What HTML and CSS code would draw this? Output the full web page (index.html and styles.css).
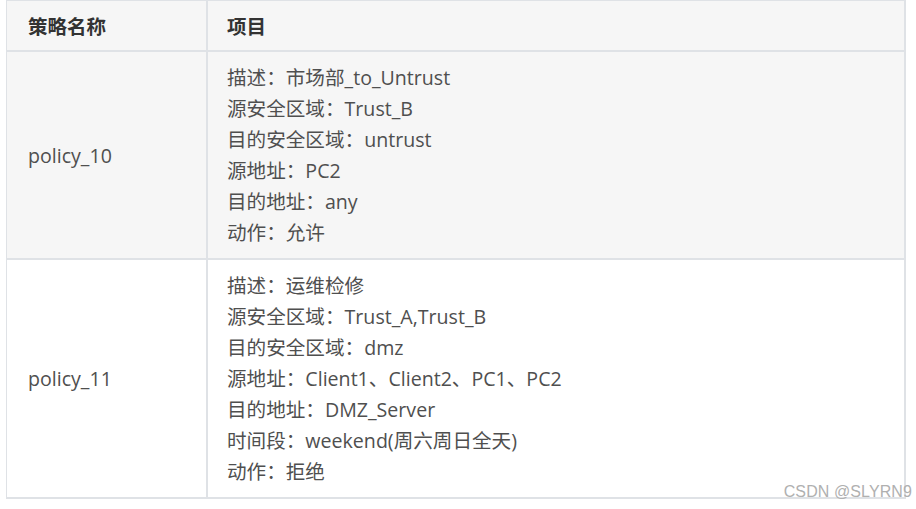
FILE: index.html
```html
<!DOCTYPE html>
<html lang="zh-CN">
<head>
<meta charset="utf-8">
<link rel="stylesheet" href="styles.css">
</head>
<body>
<div class="page">
<table class="policy">
  <thead>
    <tr><th class="c1">策略名称</th><th class="c2">项目</th></tr>
  </thead>
  <tbody>
    <tr class="odd">
      <td class="c1">policy_10</td>
      <td class="c2">描述：市场部_to_Untrust<br>源安全区域：Trust_B<br>目的安全区域：untrust<br>源地址：PC2<br>目的地址：any<br>动作：允许</td>
    </tr>
    <tr class="even">
      <td class="c1">policy_11</td>
      <td class="c2">描述：运维检修<br>源安全区域：Trust_A,Trust_B<br>目的安全区域：dmz<br>源地址：Client1、Client2、PC1、PC2<br>目的地址：DMZ_Server<br>时间段：weekend(周六周日全天)<br>动作：拒绝</td>
    </tr>
  </tbody>
</table>
<div class="watermark">CSDN @SLYRN9</div>
</div>
</body>
</html>
```

FILE: styles.css
```css
html, body {
  margin: 0;
  padding: 0;
  background: #ffffff;
}
.page {
  position: relative;
  width: 916px;
  height: 509px;
  padding: 0 0 0 6px;
  box-sizing: border-box;
  font-family: "Open Sans", "Noto Sans CJK SC", sans-serif;
}
.policy {
  border-collapse: collapse;
  width: 900px;
  table-layout: fixed;
  font-size: 19.6px;
  color: #4f4f4f;
}
.policy th, .policy td {
  border: 2px solid #dfe2e6;
  text-align: left;
  vertical-align: middle;
}
.policy tr > :first-child { border-left-width: 1px; }
.policy thead th { border-top-width: 1px; }
.policy th {
  background: #f6f6f6;
  color: #333333;
  font-weight: 700;
  height: 49px;
  padding: 0 20px 0 21px;
  font-size: 19.5px;
}
.policy td {
  padding: 10px 20px 10px 21px;
  line-height: 31px;
}
.policy td.c2, .policy th.c2 { padding-left: 19px; }
.policy .c1 { width: 158px; }
.odd td { background: #f6f6f6; }
.even td { background: #ffffff; }
.watermark {
  position: absolute;
  right: 4px;
  top: 483px;
  font-family: "Liberation Sans", Arial, sans-serif;
  font-size: 16px;
  color: #b0b0b0;
  letter-spacing: 0.1px;
}
```
